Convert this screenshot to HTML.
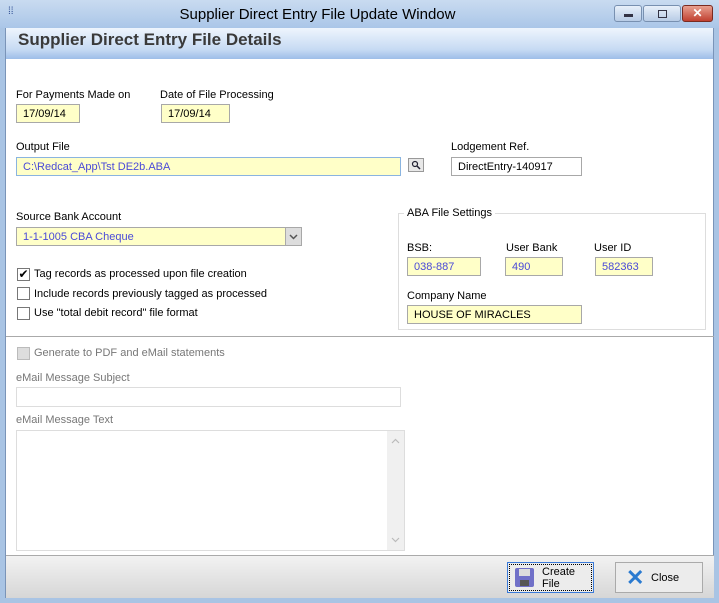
<!DOCTYPE html><html><head><style>
*{margin:0;padding:0;box-sizing:border-box}
body{width:719px;height:603px;position:relative;overflow:hidden;font-family:"Liberation Sans",sans-serif;font-size:11px;color:#000;background:#a9c4e4}
.a{position:absolute}
.lbl{position:absolute;font-size:11px;white-space:nowrap}
.in{position:absolute;background:#ffffc8;border:1px solid #a8a8a8;font-size:11px;padding:3px 6px 0;height:19px;white-space:nowrap;line-height:13px}
.blue{color:#4a4ad8}
.cb{position:absolute;width:13px;height:13px;border:1px solid #777;background:#fff}
</style></head><body>
<div class="a" style="left:0;top:0;width:719px;height:28px;background:linear-gradient(#c9dbf0,#aac6e8)"></div>
<div class="a" style="left:8px;top:6px;color:#2a4a90;font-size:10px">⁞⁞</div>
<div class="a" style="left:0;top:6px;width:635px;text-align:center;font-size:15px;color:#000">Supplier Direct Entry File Update Window</div>
<div class="a" style="left:614px;top:5px;width:28px;height:17px;border:1px solid #7890b0;border-radius:3px;background:linear-gradient(#e8f0fa,#b8cce6)"><div class="a" style="left:9px;top:8px;width:9px;height:3px;background:#334"></div></div>
<div class="a" style="left:643px;top:5px;width:38px;height:17px;border:1px solid #7890b0;border-radius:3px;background:linear-gradient(#e8f0fa,#b8cce6)"><div class="a" style="left:14px;top:4px;width:9px;height:8px;border:1px solid #334"></div></div>
<div class="a" style="left:682px;top:5px;width:31px;height:17px;border:1px solid #7a2a20;border-radius:3px;background:linear-gradient(#e8a090,#c04030);color:#fff;font-weight:bold;text-align:center;font-size:12px;line-height:15px">✕</div>
<div class="a" style="left:5px;top:28px;width:709px;height:570px;background:#fff;border:1px solid #7a94b8"></div>
<div class="a" style="left:6px;top:28px;width:707px;height:31px;background:linear-gradient(#eef5fd,#c6daf3 70%,#9dbde8)"></div>
<div class="a" style="left:18px;top:30px;font-size:17px;font-weight:bold;color:#3a3a3a">Supplier Direct Entry File Details</div>
<div class="lbl" style="left:16px;top:89px">For Payments Made on</div>
<div class="lbl" style="left:160px;top:89px">Date of File Processing</div>
<div class="in" style="left:16px;top:104px;width:64px">17/09/14</div>
<div class="in" style="left:161px;top:104px;width:69px">17/09/14</div>
<div class="lbl" style="left:16px;top:141px">Output File</div>
<div class="in blue" style="left:16px;top:157px;width:385px;border-color:#8ab4e0">C:\Redcat_App\Tst DE2b.ABA</div>
<div class="a" style="left:408px;top:158px;width:16px;height:14px;border:1px solid #999;background:#e8e8e8"><svg width="14" height="12"><circle cx="6" cy="5" r="2.5" fill="none" stroke="#223" stroke-width="1.2"/><path d="M8 7l3 3" stroke="#223" stroke-width="1.5"/></svg></div>
<div class="lbl" style="left:451px;top:141px">Lodgement Ref.</div>
<div class="in" style="left:451px;top:157px;width:131px;background:#fff">DirectEntry-140917</div>
<div class="lbl" style="left:16px;top:211px">Source Bank Account</div>
<div class="in blue" style="left:16px;top:227px;width:286px">1-1-1005 CBA Cheque</div>
<div class="a" style="left:285px;top:228px;width:16px;height:17px;background:#ddd;border-left:1px solid #aaa"><svg width="15" height="17"><path d="M4 7l3.5 3.5L11 7" fill="none" stroke="#555" stroke-width="1.5"/></svg></div>
<div class="cb" style="left:17px;top:268px;font-size:12px;line-height:11px;text-align:center">✔</div>
<div class="lbl" style="left:34px;top:268px">Tag records as processed upon file creation</div>
<div class="cb" style="left:17px;top:287px"></div>
<div class="lbl" style="left:34px;top:288px">Include records previously tagged as processed</div>
<div class="cb" style="left:17px;top:307px"></div>
<div class="lbl" style="left:34px;top:307px">Use "total debit record" file format</div>
<div class="a" style="left:398px;top:213px;width:308px;height:117px;border:1px solid #ddd"></div>
<div class="lbl" style="left:404px;top:207px;background:#fff;padding:0 3px">ABA File Settings</div>
<div class="lbl" style="left:407px;top:242px">BSB:</div>
<div class="lbl" style="left:506px;top:242px">User Bank</div>
<div class="lbl" style="left:594px;top:242px">User ID</div>
<div class="in blue" style="left:407px;top:257px;width:74px">038-887</div>
<div class="in blue" style="left:505px;top:257px;width:58px">490</div>
<div class="in blue" style="left:595px;top:257px;width:58px">582363</div>
<div class="lbl" style="left:407px;top:290px">Company Name</div>
<div class="in" style="left:407px;top:305px;width:175px">HOUSE OF MIRACLES</div>
<div class="a" style="left:6px;top:336px;width:708px;height:1px;background:#aaa"></div>
<div class="cb" style="left:17px;top:347px;background:#ddd;border-color:#bbb"></div>
<div class="lbl" style="left:34px;top:347px;color:#777">Generate to PDF and eMail statements</div>
<div class="lbl" style="left:16px;top:372px;color:#777">eMail Message Subject</div>
<div class="a" style="left:16px;top:387px;width:385px;height:20px;border:1px solid #ddd"></div>
<div class="lbl" style="left:16px;top:414px;color:#777">eMail Message Text</div>
<div class="a" style="left:16px;top:430px;width:389px;height:121px;border:1px solid #ddd"><div class="a" style="right:0;top:0;width:17px;height:119px;background:#f0f0f0"><svg width="17" height="119"><path d="M5 12l3.5-3.5L12 12M5 107l3.5 3.5L12 107" fill="none" stroke="#bbb" stroke-width="1.2"/></svg></div></div>
<div class="a" style="left:6px;top:555px;width:708px;height:43px;background:linear-gradient(#f2f2f2,#d6d6d6);border-top:1px solid #aaa"></div>
<div class="a" style="left:507px;top:562px;width:87px;height:31px;border:1px solid #3a7ad8;background:#ececec"><div class="a" style="left:1px;top:1px;right:1px;bottom:1px;border:1px dotted #000"></div>
<div class="a" style="left:7px;top:5px;width:19px;height:19px;background:#7070c8;border-radius:2px"><div class="a" style="left:4px;top:1px;width:11px;height:7px;background:#ddd"></div><div class="a" style="left:5px;top:12px;width:9px;height:6px;background:#555"></div></div>
<div class="lbl" style="left:34px;top:3px;line-height:12px">Create<br>File</div></div>
<div class="a" style="left:615px;top:562px;width:88px;height:31px;border:1px solid #aaa;background:#ececec">
<div class="a" style="left:10px;top:2px;font-size:22px;font-weight:bold;color:#2a7ad0;line-height:26px">✕</div>
<div class="lbl" style="left:35px;top:9px">Close</div></div>
</body></html>
